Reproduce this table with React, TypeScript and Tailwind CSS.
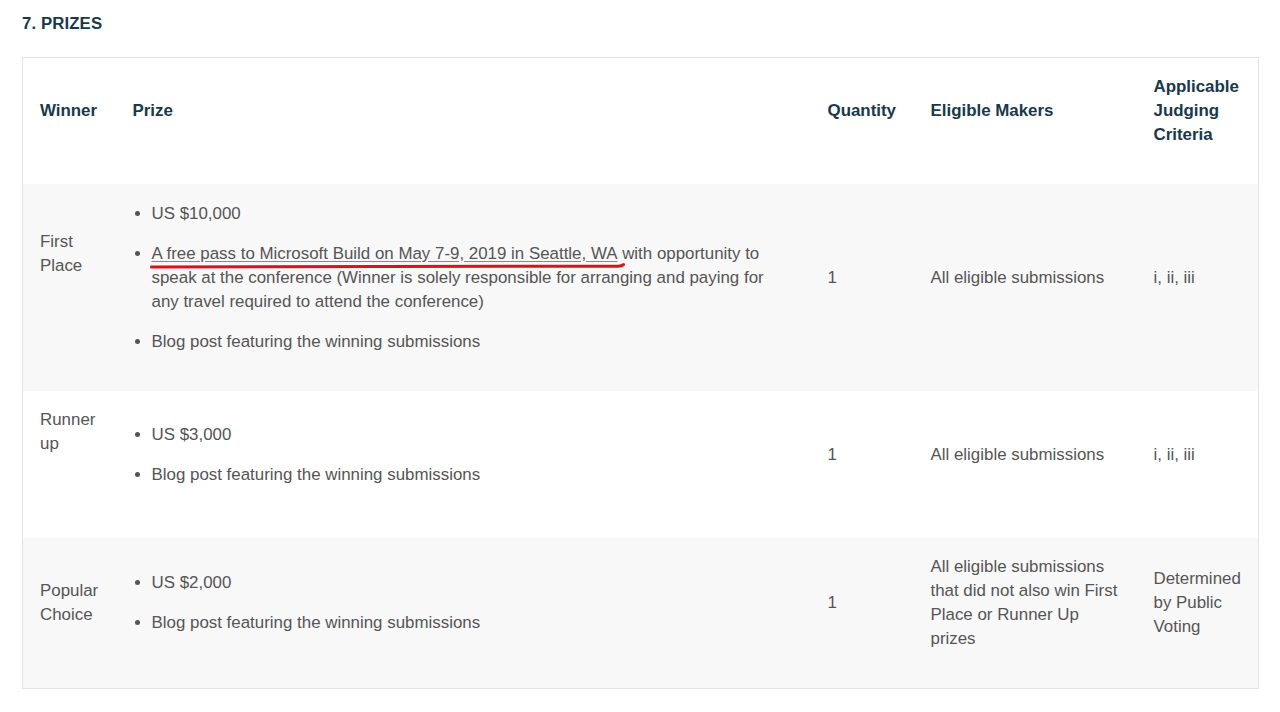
import React from "react";

const font = { fontFamily: '"Liberation Sans", Arial, sans-serif' };

function Bullets({ children }: { children: React.ReactNode }) {
  return <ul className="list-disc pl-[19px] m-0 flex flex-col gap-4">{children}</ul>;
}

export default function App() {
  return (
    <div className="bg-white w-[1280px] h-[712px] overflow-hidden" style={font}>
      <div className="pl-[22px] pt-[14px]">
        <h2 className="text-[16.8px] leading-[20px] font-bold text-[#17394d] tracking-[0.1px]">7. PRIZES</h2>
      </div>
      <div className="pl-[22px] pr-[22px] pt-[23px]">
        <table className="w-[1236px] border border-[#e3e3e3] border-collapse table-fixed text-[16.9px] leading-[24px] text-[#555555]">
          <colgroup>
            <col className="w-[93px]" />
            <col className="w-[695px]" />
            <col className="w-[103px]" />
            <col className="w-[223px]" />
            <col className="w-[122px]" />
          </colgroup>
          <thead>
            <tr className="bg-white text-[#17394d] font-bold text-left h-[126px]">
              <th className="pl-[17px] pr-[14px] pt-[17px] pb-[37px] align-middle font-bold">Winner</th>
              <th className="pl-[17px] pr-[24px] pt-[17px] pb-[37px] align-middle font-bold">Prize</th>
              <th className="pl-[17px] pr-[14px] pt-[17px] pb-[37px] align-middle font-bold">Quantity</th>
              <th className="pl-[17px] pr-[14px] pt-[17px] pb-[37px] align-middle font-bold">Eligible Makers</th>
              <th className="pl-[17px] pr-[14px] pt-[17px] pb-[37px] align-middle font-bold">Applicable Judging Criteria</th>
            </tr>
          </thead>
          <tbody>
            <tr className="bg-[#f8f8f8] h-[207px]">
              <td className="pl-[17px] pr-[14px] pt-[17px] pb-[37px] align-middle">
                <div className="mb-[47px]">First Place</div>
              </td>
              <td className="pl-[17px] pr-[24px] pt-[17px] pb-[37px] align-middle">
                <Bullets>
                  <li>US $10,000</li>
                  <li>
                    <span className="relative">
                      <span className="underline decoration-[#888] underline-offset-[2px]">A free pass to Microsoft Build on May 7-9, 2019 in Seattle, WA</span>
                      <svg className="absolute left-[-2px] top-[18px] pointer-events-none" width="476" height="8" viewBox="0 0 476 8">
                        <path d="M1.5 5 C 120 4.8, 300 4.4, 468 4.2 C 471 4.1, 472.5 3.6, 473.5 2.6" stroke="#e0101a" strokeWidth="3" fill="none" strokeLinecap="round" />
                      </svg>
                    </span>{" "}
                    with opportunity to speak at the conference (Winner is solely responsible for arranging and paying for any travel required to attend the conference)
                  </li>
                  <li>Blog post featuring the winning submissions</li>
                </Bullets>
              </td>
              <td className="pl-[17px] pr-[14px] pt-[17px] pb-[37px] align-middle">1</td>
              <td className="pl-[17px] pr-[14px] pt-[17px] pb-[37px] align-middle">All eligible submissions</td>
              <td className="pl-[17px] pr-[14px] pt-[17px] pb-[37px] align-middle">i, ii, iii</td>
            </tr>
            <tr className="bg-white h-[147px]">
              <td className="pl-[17px] pr-[14px] pt-[17px] pb-[37px] align-middle">
                <div className="mb-[45px]">Runner up</div>
              </td>
              <td className="pl-[17px] pr-[24px] pt-[17px] pb-[37px] align-middle">
                <Bullets>
                  <li>US $3,000</li>
                  <li>Blog post featuring the winning submissions</li>
                </Bullets>
              </td>
              <td className="pl-[17px] pr-[14px] pt-[17px] pb-[37px] align-middle">1</td>
              <td className="pl-[17px] pr-[14px] pt-[17px] pb-[37px] align-middle">All eligible submissions</td>
              <td className="pl-[17px] pr-[14px] pt-[17px] pb-[37px] align-middle">i, ii, iii</td>
            </tr>
            <tr className="bg-[#f8f8f8] h-[150px]">
              <td className="pl-[17px] pr-[14px] pt-[17px] pb-[37px] align-middle">Popular Choice</td>
              <td className="pl-[17px] pr-[24px] pt-[17px] pb-[37px] align-middle">
                <Bullets>
                  <li>US $2,000</li>
                  <li>Blog post featuring the winning submissions</li>
                </Bullets>
              </td>
              <td className="pl-[17px] pr-[14px] pt-[17px] pb-[37px] align-middle">1</td>
              <td className="pl-[17px] pr-[14px] pt-[17px] pb-[37px] align-middle">All eligible submissions that did not also win First Place or Runner Up prizes</td>
              <td className="pl-[17px] pr-[14px] pt-[17px] pb-[37px] align-middle">Determined by Public Voting</td>
            </tr>
          </tbody>
        </table>
      </div>
    </div>
  );
}
